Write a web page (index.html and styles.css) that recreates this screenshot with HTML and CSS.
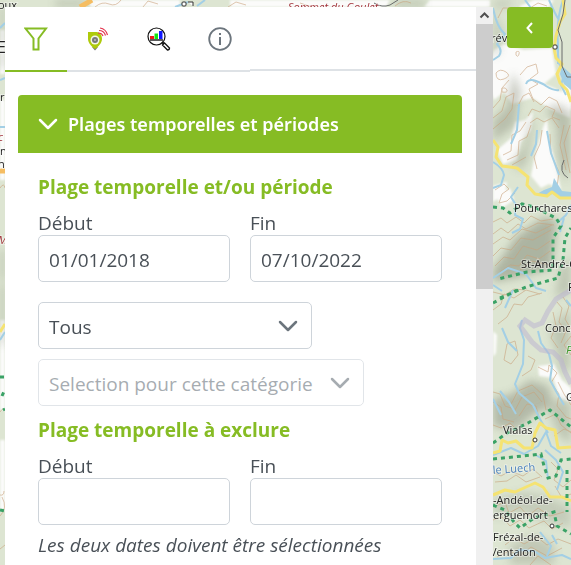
FILE: index.html
```html
<!DOCTYPE html>
<html lang="fr">
<head>
<meta charset="utf-8">
<meta name="viewport" content="width=device-width, initial-scale=1">
<title>Plages temporelles et périodes</title>
<link rel="stylesheet" href="styles.css">
</head>
<body>
<svg class="map" viewBox="0 0 571 565" preserveAspectRatio="xMinYMin slice" role="img" aria-label="Carte">
  <defs>
    <filter id="soft" x="-50%" y="-50%" width="200%" height="200%"><feGaussianBlur stdDeviation="4"/></filter>
    <filter id="edge"><feGaussianBlur stdDeviation="1"/></filter>
  </defs>
  <rect width="571" height="565" fill="#dde5d2"/>
  <!-- clearings -->
  <g fill="#fbfbfa" filter="url(#edge)">
    <path d="M494 50l10-6 20 6 28-2 4 26-12 10 10 4 16 8v22l-14-6-24-14-20 6-8-12-10 8-8-22z"/>
    <path d="M497 150l14-12 4-16 10-2 8-8-2 18-10 12-4 18-14 4z"/>
    <path d="M531 176l4-22 8-26 4-10 2 22 6 20 6 30-12-6-8 4z"/>
    <path d="M520 6l14-6h20l-6 8h-28zM562 88l9-8v30l-8-8z"/>
    <path d="M493 186l14-4-2 12-12 8zM496 196l14-8 4 12-12 8z"/>
    <path d="M493 331l4 4-1 18-3 4zM538 366l16-2 8 16 9 8v14l-12-4-6-20-14-2z"/>
    <path d="M0 30h5v44H0zM0 100h5v80H0zM0 320h5v90H0zM0 440h5v70H0z"/>
    <path d="M90 0h90v7H90zM230 0h160l-4 7H230zM430 0h60v7h-66z"/>
  </g>
  <!-- relief -->
  <g class="relief" filter="url(#soft)">
    <path opacity=".6" d="M493 120l14-14 6-34 8 20-6 34-22 16z"/>
    <path opacity=".5" d="M512 162l12-16 6-30 4 8-6 36-8 12z"/>
    <path opacity=".6" d="M546 110l10 14 2 34 8 24 5-20v-50l-14-8z"/>
    <path opacity=".8" d="M493 270l24-34 26-18 14 2-2 20-4 28-28 8-30 6z"/>
    <path opacity=".5" d="M560 268l11-12v36l-16 6z"/>
    <path opacity=".7" d="M512 394l18-14 18 6 6 20-20 8-18 16-23-4v-28z"/>
    <path opacity=".5" d="M550 330l20-22v60l-8 6z"/>
    <path opacity=".5" d="M558 398l13 6v40l-12-8-10-24z"/>
    <path opacity=".4" d="M493 500l30-8 24 4 24 12v20l-30-8-20-8-28 6z"/>
    <path opacity=".45" d="M510 545l24-10 20 10v20h-44z"/>
    <path opacity=".5" d="M0 6h5v40H0zM0 50h5v18H0zM0 250h5v30H0zM0 285h5v60H0zM55 0h36l-10 7H55zM395 0h30v7h-30z"/>
    <path opacity=".4" d="M493 10l10 20-4 24-6 4zM495 0h20l-8 8h-14z"/>
  </g>
  <!-- contour lines -->
  <g class="contour">
    <path d="M496 73q4-5 10-1t-2 7-8-6zM502 88q4-1 5 2t-5 2zM516 52q4-2 3 2t-3 1z"/>
    <path d="M520 75l7-8 9-3 2 9-8 6 8 5-9 5 4 10 8 6 8-8 8 4 5 12"/>
    <path d="M493 118l9-7 4-14 8-4-2 16-7 10-12 10M493 108l7-8 2-12 7-8"/>
    <path d="M528 116l4-7 8 3 6-6 9 4-3 7 8 3M530 123l7-5 7 4 8-4 7 10M518 106l5-10 6-3 5 9"/>
    <path d="M503 155l8-4 1-16 8-4 6-9M507 160l11-5 1-14 8-4 4-12M512 165l14-8"/>
    <path d="M542 130l-2 14-6 13 3 12M550 134l1 20 8 18-2 15M564 125l-4 20 6 25M570 125l-6 18 6 30"/>
    <path d="M495 190l9-6 5 5-7 5-3 9 8-2 8-8M493 222l8-4 6 5 9-6 8 6 7-7 10 5 12-2"/>
    <path d="M493 234l8-6 7 5 10-9 8 5 12-6 16 2M493 244l10-7 7 3 12-11 14 4 16-8"/>
    <path d="M493 256l8-8 10 2 10-12 12 2 18-10M495 266l9-9 10 2 9-13 14 4 13-9M500 272l10-7 9 1 8-11 12 4 11-8M520 270l12-9 17 4"/>
    <path d="M493 310l8-6 3-10 10 4 12-8 14 4M498 324l9-7 7-13 8 1 6-8 14-4M493 292l12 3 9-6 11 1"/>
    <path d="M557 302l5 6-3 14 7 9-5 12M563 297l6 9-4 13 6 10M553 312l3 14-5 12 7 10M571 336l-7 9 7 10"/>
    <path d="M538 367l10 5 1-7 8 8-6 10M507 344l8-3 3 14-7 9-7-4zM528 356l7 4-4 10-9 6"/>
    <path d="M493 392l7 2 5 12 9 3M493 402l8 5 2 12 11 3M510 406l8-15 14-6 11 10 3 15M514 412l8-15 12-5 8 10M519 416l8-12 9 2 3 13"/>
    <path d="M552 384l7 10-2 12 9 11 5 2M558 382l6 12 7 11M545 419l11-5 5 11 10 8M554 436l10-7 7 3"/>
    <path d="M493 425l8 3 9-5 7 7M493 472l8 4 9-5 13 5 10-7 9 8M495 482l12-1 9-6 10 7 14-5M551 462l7 7-4 11 9 7 8-7"/>
    <path d="M493 507l12-5 4 11 11-6 8 9 10-8 12 8 14-4M493 520l9-3 8 9 10-6 9 8 15-7 8 8 11-6"/>
    <path d="M505 545l9-7 10 6 13-7 10 8 11-6 13 5M497 557l12-6 11 5 11-9 16 9 15-8M530 565l8-9 13 9M555 486l7 12 9-4"/>
    <path d="M0 188q4-6 5 0M0 412q4-6 5-1M0 495q4 1 4-4M0 516q8-8 2-19M0 549l5-4M95 7q7-6 14-3t12-4M228 7l8-5 10 3M143 7l5-6 10 3M300 3l12 4M395 6q8-7 16-3"/>
    <path d="M518 15l8-7 10 4-6 6M498 18l5-10 8 0M530 8l8-5 9 3"/>
  </g>
  <!-- lakes and rivers -->
  <path class="lake" d="M535 195l12 1 8-3 6 6h10v-7l-9-1-8-13-2 9-8 3z"/>
  <path class="lake" d="M562 66l9 8v16l-7-6-4-10z"/>
  <g class="river">
    <path d="M493 8q4 20 12 26l-8 10q6 6 2 12l-6 4M525 0l6 8M563 0q-7 20-5 44v20M549 0q6 14 10 20"/>
    <path d="M526 84q2-6 10-3t10 5q8 5 13 4M519 104l-2 26-6 14M537 130l-1 14-5 12M547 131l4 22 8 22M557 45l2 18 5 12-3 10 5 10"/>
    <path d="M493 162q10 6 11 13l-3 10-8 3M518 187l-7 10 5 8-1 10 8 4-3 10-8 4M493 278l15-10 18 6 10 14 10 3"/>
    <path d="M557 223l9-8 5-10M560 232l4-14M493 285l9 6"/>
    <path d="M502 328l6 14 9 9M522 320l-2 8 4 12-1 24-8 20 4 9 14 12 7 14 8 14"/>
    <path d="M538 331l3 12 8 11 3 12-2 14 7 13 7 12M500 391l9 11 7 12M493 399l8 16M566 300l5 6M513 290l-8 18"/>
    <path d="M493 455l18-7 13 6 14-8 8-14 5 14 10 7M557 490l6-18-7-12-11-10M534 454l12 7 2 18"/>
    <path d="M493 559l18-1 8-8 15 1 11 7 17-3 9 4M540 532l11 14-4 10M552 535l5 9"/>
    <path d="M0 28l5-5M0 127h5M0 340l5-8M175 7l13-5M205 0l-8 6M0 80l5-2"/>
  </g>
  <!-- park boundary -->
  <path class="park" d="M571 290l-15 9-8 12-6 12-8 3-9-6-5 6 12 16 9 8 12 2 8 8 4 12 6 12"/>
  <!-- roads -->
  <g class="road">
    <path d="M563 0l2 14-5 8-4 14-2 12 2 10 6 6-5 10 3 9 7 7 4 12"/>
    <path d="M493 140l5 7-2 10 6 9 15 2 11 9-1 8 8 9 12 2 5-4 8 6h11"/>
    <path d="M493 453l7-2 2-11 6 3 8-2 8 7h8l3-15 5-10 6 5 9 2 3 18 13-1"/>
    <path d="M493 495l12-5 10 2 20-9 8 4 7 10h12l9 4M0 332l5-8"/>
  </g>
  <path d="M0 171h5M80 7l12-7" stroke="#f5bd62" stroke-width="5" fill="none"/>
  <path d="M565 0l-2 14-5 16 4 12v24l5 11h4M374 3q8 5 16 2l8-5M564 160q-6 12 4 18" fill="none" stroke="#696b6a" stroke-width="1"/>
  <!-- walking trails -->
  <g class="trail">
    <path d="M493 207l10 1 7 5 12-9 12 3 22 11 5 8-8 12v32l-26 2-29 7"/>
    <path d="M500 298l26-11 32-9 5-18 2-22 6-10M493 303l24-13"/>
    <path d="M493 443l14-10 21-10 22-13 21 17"/>
    <path d="M493 459l30-3 18-2 3 12 4 12 8-2 5-16 10-1M567 470v42"/>
    <path d="M493 505l12 5 9 12 6 6 14-10 20-6 3 14 14 8"/>
    <path d="M0 377h5M2 396l3-7M3 410l2-1M0 510l5 1"/>
  </g>
  <!-- place markers -->
  <g fill="#fff" stroke="#333" stroke-width="1">
    <rect x="553" y="45" width="4" height="4" rx="1"/>
    <circle cx="535" cy="440" r="2"/><circle cx="552" cy="526" r="2"/>
    <rect x="182" y="2" width="4" height="4" rx="1"/><path d="M188 2h5v4"/>
  </g>
  <g class="place">
    <text x="-2" y="9">oux</text>
    <text x="491" y="42">rév</text>
    <text x="514" y="212">Pourchares</text>
    <text x="521" y="268">St-André-C</text>
    <text x="568" y="291">P</text>
    <text x="545" y="332">Conco</text>
    <text x="566" y="401">G</text>
    <text x="503" y="434">Vialas</text>
    <text x="493" y="504">-Andéol-de-</text>
    <text x="493" y="519">erguemort</text>
    <text x="493" y="541">Frézal-de-</text>
    <text x="490" y="556">Ventalon</text>
    <text x="-3" y="53" font-size="16">E</text>
    <text x="0" y="101">ro</text><text x="0" y="155">n</text><text x="-2" y="168">n</text>
    <text x="566" y="354" class="forest">F</text>
    <text x="493" y="474" class="water" transform="rotate(-4 493 474)">le Luech</text>
    <text x="288" y="11" class="peak">Sommet du Goulet</text>
    <text x="-2" y="141" class="peak">c</text><text x="-2" y="244" class="peak">M</text>
  </g>
</svg>

<main class="layout">
  <section class="panel" aria-label="Filtres">
    <div class="content">
      <nav class="tabs">
        <button class="tab active" type="button" aria-label="Filtres">
          <svg class="icon" viewBox="0 0 24 24"><path d="M1.500 1.500h20.500L14.500 11.500v11h-5v-11z" fill="none" stroke="#86bc24" stroke-width="2" stroke-linejoin="miter"/></svg>
        </button>
        <button class="tab" type="button" aria-label="Stations">
          <svg class="icon" viewBox="0 0 24 24">
            <path d="M6 20h6l-3 3.500z" fill="#777"/>
            <path d="M2 5h8.500C14 5 16 8.500 16 12c0 4-4 8-7 10-3-2-7-6-7-10z" fill="#afca0b"/>
            <circle cx="9" cy="13" r="4.500" fill="#f4f6ea"/><circle cx="9" cy="13" r="3" fill="#797979"/><circle cx="9" cy="13" r="1" fill="#bbb"/>
            <path d="M12 6q4 0 5 3M13 3.500q5 0 6.500 5M14 1q6 1 7.500 7" fill="none" stroke="#e3344e" stroke-width="1.200"/>
          </svg>
        </button>
        <button class="tab" type="button" aria-label="Analyse">
          <svg class="icon" viewBox="0 0 24 24">
            <circle cx="9.500" cy="9.500" r="8.500" fill="#fff" stroke="#111" stroke-width="1.200"/>
            <path d="M3 9h4v3H3z" fill="#f21616"/><path d="M7.500 6.500H11V12H7.500z" fill="#12e612"/><path d="M12 4h3.500v8H12z" fill="#1018ff"/>
            <path d="M3 13h13" stroke="#000" stroke-width="1.300"/>
            <path d="M15 15l2 2" stroke="#111" stroke-width="2"/>
            <path d="M17.500 16l5 5q0 2-2 2l-5-5z" fill="#fff" stroke="#111" stroke-width="1.300"/>
          </svg>
        </button>
        <button class="tab" type="button" aria-label="Informations">
          <svg class="icon" viewBox="0 0 24 24"><circle cx="12" cy="12" r="10.800" fill="none" stroke="#6c757d" stroke-width="1.800"/><path d="M12 10v8M12 6v2" stroke="#6c757d" stroke-width="2"/></svg>
        </button>
      </nav>

      <section class="card">
        <h2 class="card-head">
          <button class="toggle" type="button" aria-expanded="true">
            <svg class="chevron" viewBox="0 0 20 20"><path d="M2 6l8 8 8-8" stroke="currentColor" stroke-width="2.500" fill="none" stroke-linecap="round" stroke-linejoin="round"/></svg>
            Plages temporelles et périodes
          </button>
        </h2>
        <div class="card-body">
          <h3 class="title">Plage temporelle et/ou période</h3>
          <div class="dates">
            <label class="field">Début<input class="control" type="text" value="01/01/2018"></label>
            <label class="field">Fin<input class="control" type="text" value="07/10/2022"></label>
          </div>
          <div class="choices">
            <div class="pick pick-period">
              <select class="control" aria-label="Période"><option>Tous</option></select>
              <svg class="chevron" viewBox="0 0 20 20"><path d="M2 6l8 8 8-8" stroke="currentColor" stroke-width="2.500" fill="none" stroke-linecap="round" stroke-linejoin="round"/></svg>
            </div>
            <div class="pick pick-category">
              <select class="control" aria-label="Catégorie" disabled><option>Selection pour cette catégorie</option></select>
              <svg class="chevron" viewBox="0 0 20 20"><path d="M2 6l8 8 8-8" stroke="currentColor" stroke-width="2.500" fill="none" stroke-linecap="round" stroke-linejoin="round"/></svg>
            </div>
          </div>
          <h3 class="title">Plage temporelle à exclure</h3>
          <div class="dates">
            <label class="field">Début<input class="control" type="text"></label>
            <label class="field">Fin<input class="control" type="text"></label>
          </div>
          <p class="note">Les deux dates doivent être sélectionnées</p>
        </div>
      </section>
    </div>
    <div class="scrollbar" aria-hidden="true">
      <svg class="scroll-up" viewBox="0 0 17 17"><path d="M4.500 10.500l4-4 4 4" fill="none" stroke="#505050" stroke-width="2"/></svg>
      <div class="thumb"></div>
    </div>
  </section>
  <button class="collapse" type="button" aria-label="Replier">
    <svg class="arrow" viewBox="0 0 12 12"><path d="M8 1L3.500 6 8 11" fill="none" stroke="#fff" stroke-width="2"/></svg>
  </button>
</main>
</body>
</html>
```
FILE: styles.css
```css
*,
*::after {
  box-sizing: border-box;
}

body {
  margin: 0;
  height: 100vh;
  overflow: hidden;
  font: 19px/24px "Open Sans", "Noto Sans", sans-serif;
  color: #495057;
}

button,
input,
select {
  font: inherit;
  color: inherit;
}

/* Map backdrop */
.map {
  position: absolute;
  inset: 0;
  width: 100%;
  height: 100%;
}

.relief {
  fill: #8d9381;
  opacity: 0.75;
}

.contour {
  fill: none;
  stroke: #c9a27c;
  stroke-width: 1;
  stroke-linejoin: round;
  opacity: 0.6;
}

.lake {
  fill: #a3cfe5;
}

.river {
  fill: none;
  stroke: #a3cfe5;
  stroke-width: 2;
  stroke-linejoin: round;
}

.park {
  fill: none;
  stroke: #b9b2cf;
  stroke-width: 5;
  opacity: 0.5;
}

.road {
  fill: none;
  stroke: #f5e372;
  stroke-width: 3;
  stroke-linejoin: round;
}

.trail {
  fill: none;
  stroke: #3aa266;
  stroke-width: 3;
  stroke-dasharray: 4 4;
}

.place {
  font-size: 11px;
  fill: #222;
  stroke: #fff;
  stroke-opacity: 0.4;
  stroke-width: 2;
  paint-order: stroke;
}

.place .forest {
  fill: #3f9b2f;
  font-style: italic;
}

.place .water {
  fill: #4d82bd;
}

.place .peak {
  fill: #a2353c;
  font-style: italic;
}

/* Side panel */
.layout {
  position: relative;
  display: flex;
  align-items: flex-start;
  gap: 14px;
  height: 100%;
  padding: 7px 18px 0 5px;
}

.panel {
  display: flex;
  flex: 1;
  height: 100%;
  min-width: 0;
  background: #fff;
}

.content {
  flex: 1;
  min-width: 0;
  overflow: hidden;
}

.tabs {
  display: flex;
  height: 65px;
}

.tabs::after {
  content: "";
  flex: 1;
  height: 64px;
  border-bottom: 2px solid #dee2e6;
}

.tab {
  display: flex;
  flex: 0 0 61px;
  justify-content: center;
  padding: 20px 0 0;
  border: 0;
  border-bottom: 2px solid #dee2e6;
  background: none;
}

.tab.active {
  flex-basis: 62px;
  border-color: #86bc24;
}

.icon {
  width: 24px;
  height: 24px;
}

.card {
  margin: 23px 14px 0 13px;
}

.card-head {
  margin: 0;
  font: 600 18px/24px "Noto Sans", "Open Sans", sans-serif;
}

.toggle {
  display: flex;
  align-items: center;
  gap: 10px;
  width: 100%;
  height: 58px;
  padding: 0 20px;
  border: 0;
  border-radius: 4px 4px 0 0;
  background: #86bc24;
  color: #fff;
  text-align: left;
}

.chevron {
  width: 20px;
  height: 20px;
}

.card-body {
  padding: 22px 20px;
}

.title {
  margin: 0 0 12px;
  font-size: 19px;
  font-weight: 700;
  color: #86bc24;
}

.dates {
  display: grid;
  grid-template-columns: 1fr 1fr;
  gap: 20px;
}

.field {
  display: flex;
  flex-direction: column;
}

.control {
  width: 100%;
  height: 47px;
  padding: 2px 10px 0;
  border: 1px solid #ced4da;
  border-radius: 5px;
  background: #fff;
  appearance: none;
}

.choices {
  display: grid;
  gap: 10px;
  margin: 20px 0 12px;
}

.pick {
  display: grid;
  align-items: center;
  max-width: 100%;
}

.pick > * {
  grid-area: 1 / 1;
}

.pick .chevron {
  justify-self: end;
  margin-right: 14px;
  color: #6c757d;
  pointer-events: none;
}

.pick-period {
  width: 274px;
}

.pick-category {
  width: 326px;
  opacity: 0.6;
}

.pick-category .control {
  opacity: 1;
  color: #6c757d;
}

.note {
  margin: 8px 0 0;
  font-style: italic;
}

/* Scroll indicator */
.scrollbar {
  flex: 0 0 17px;
  background: #f0f0f0;
}

.scroll-up {
  display: block;
  width: 17px;
  height: 17px;
}

.thumb {
  height: 49%;
  max-height: 265px;
  background: #cdcdcd;
}

.collapse {
  display: flex;
  align-items: center;
  justify-content: center;
  width: 46px;
  height: 41px;
  padding: 0;
  border: 0;
  border-radius: 4px;
  background: #86bc24;
}

.arrow {
  width: 12px;
  height: 12px;
}
```
